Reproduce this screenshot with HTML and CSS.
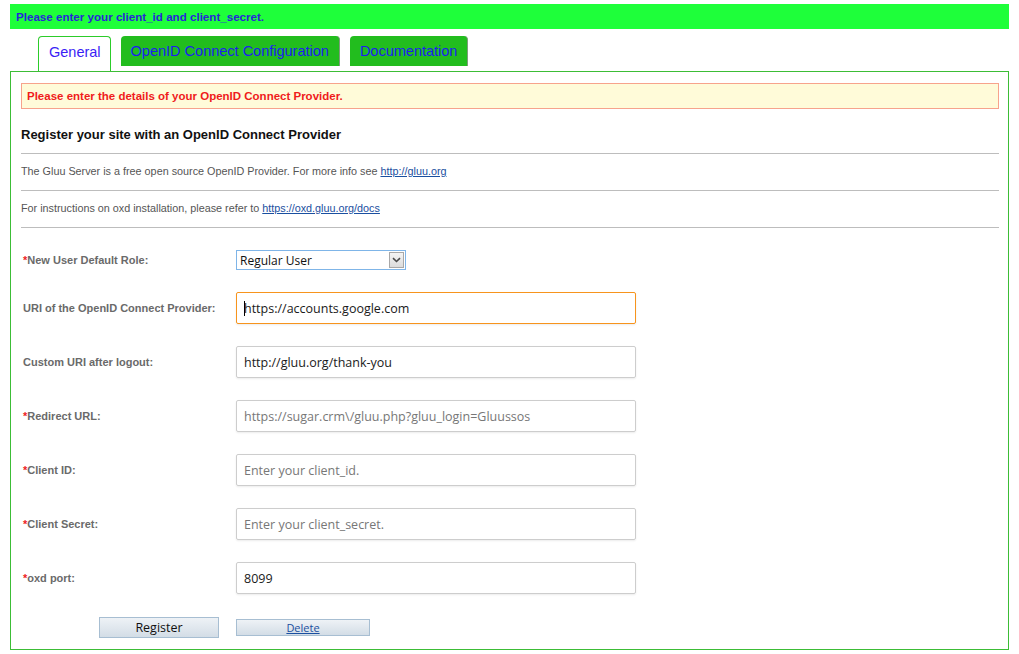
FILE: index.html
```html
<!DOCTYPE html>
<html>
<head>
<meta charset="utf-8">
<link rel="stylesheet" href="styles.css">
</head>
<body>
<div class="notice">Please enter your client_id and client_secret.</div>
<div class="tabs">
  <div class="tab active">General</div>
  <div class="tab">OpenID Connect Configuration</div>
  <div class="tab">Documentation</div>
</div>
<div class="panel">
  <div class="alert">Please enter the details of your OpenID Connect Provider.</div>
  <h2 class="title">Register your site with an OpenID Connect Provider</h2>
  <p class="info">The Gluu Server is a free open source OpenID Provider. For more info see <a href="#">http://gluu.org</a></p>
  <p class="info">For instructions on oxd installation, please refer to <a href="#">https://oxd.gluu.org/docs</a></p>
  <div class="form">
    <div class="row row-select">
      <label class="lbl"><span class="req">*</span>New User Default Role:</label>
      <div class="select">
        <span class="select-text">Regular User</span>
        <span class="select-btn"><svg width="9" height="6" viewBox="0 0 9 6"><path d="M1 1.2 L4.5 4.5 L8 1.2" fill="none" stroke="#4a4a4a" stroke-width="1.6"/></svg></span>
      </div>
    </div>
    <div class="row">
      <label class="lbl">URI of the OpenID Connect Provider:</label>
      <div class="input focus"><span class="caret"></span>https://accounts.google.com</div>
    </div>
    <div class="row">
      <label class="lbl">Custom URI after logout:</label>
      <div class="input">http://gluu.org/thank-you</div>
    </div>
    <div class="row">
      <label class="lbl"><span class="req">*</span>Redirect URL:</label>
      <div class="input muted">https://sugar.crm\/gluu.php?gluu_login=Gluussos</div>
    </div>
    <div class="row">
      <label class="lbl"><span class="req">*</span>Client ID:</label>
      <div class="input muted">Enter your client_id.</div>
    </div>
    <div class="row">
      <label class="lbl"><span class="req">*</span>Client Secret:</label>
      <div class="input muted">Enter your client_secret.</div>
    </div>
    <div class="row">
      <label class="lbl"><span class="req">*</span>oxd port:</label>
      <div class="input">8099</div>
    </div>
    <div class="row row-buttons">
      <div class="btn-cell"><button class="btn btn-register">Register</button></div>
      <div><button class="btn btn-delete"><a href="#">Delete</a></button></div>
    </div>
  </div>
</div>
</body>
</html>
```
FILE: styles.css
```css
html, body { margin: 0; padding: 0; background: #fff; }
body {
  padding: 4px 10px 0 10px;
  font-family: "Liberation Sans", Arial, sans-serif;
  width: 999px;
}
.notice {
  background: #1eff3a;
  height: 25px;
  line-height: 25px;
  padding-left: 6px;
  color: #2626d9;
  font-weight: bold;
  font-size: 11.6px;
}
.tabs {
  display: flex;
  gap: 10px;
  margin-top: 7px;
  padding-left: 28px;
  height: 35px;
  align-items: flex-start;
  position: relative;
  z-index: 2;
}
.tab {
  height: 30px;
  line-height: 31px;
  padding: 0 10px;
  font-size: 14.5px;
  color: #1c1cf0;
  background: #22bd1e;
  border-radius: 4px 4px 0 0;
  border-right: 1px solid #7e9a7c;
}
.tab.active {
  height: 35px;
  background: #fff;
  border: 1px solid #2ccc2a;
  border-bottom: none;
  box-sizing: border-box;
  line-height: 31px;
  color: #3a1ef5;
  padding: 0 9px 0 10px;
}
.panel {
  border: 1px solid #3cbd36;
  height: 579px;
  box-sizing: border-box;
  padding: 11px 9px 0 10px;
}
.alert {
  background: #fffbd9;
  border: 1px solid #f7a38c;
  height: 26px;
  box-sizing: border-box;
  line-height: 24px;
  padding-left: 5px;
  color: #ef1c1c;
  font-weight: bold;
  font-size: 11.5px;
}
.title {
  margin: 0;
  font-size: 13px;
  font-weight: bold;
  color: #111;
  height: 44px;
  line-height: 51px;
  border-bottom: 1px solid #bdbdbd;
}
.info {
  margin: 0;
  font-size: 10.8px;
  color: #555;
  height: 36px;
  line-height: 34px;
  border-bottom: 1px solid #bdbdbd;
}
.info a { color: #1a4fa0; }
.form {
  padding: 22px 0 0 2px;
}
.row {
  display: grid;
  grid-template-columns: 213px 400px;
  align-items: center;
  height: 32px;
  margin-bottom: 22px;
}
.row-select { height: 20px; margin-bottom: 22px; }
.lbl {
  font-size: 11px;
  font-weight: bold;
  color: #6a6a6a;
}
.req { color: #e22; }
.select {
  width: 170px;
  height: 20px;
  box-sizing: border-box;
  border: 1px solid #7fb5e8;
  display: flex;
  align-items: center;
  font-family: "Open Sans", sans-serif;
  font-size: 12px;
  color: #111;
  background: #fff;
}
.select-text { flex: 1; padding-left: 3px; }
.select-btn {
  width: 15px;
  height: 16px;
  margin-right: 1px;
  border: 1px solid #a8a8a8;
  box-sizing: border-box;
  background: linear-gradient(#f4f4f4, #dcdcdc);
  display: flex;
  align-items: center;
  justify-content: center;
}
.input {
  height: 32px;
  box-sizing: border-box;
  border: 1px solid #cdcdcd;
  border-radius: 2px;
  box-shadow: 0 1px 2px rgba(0,0,0,0.08);
  font-family: "Open Sans", sans-serif;
  font-size: 12.5px;
  color: #1a1a1a;
  line-height: 31px;
  padding-left: 7px;
  position: relative;
  white-space: nowrap;
}
.input.focus { border-color: #f7941d; }
.input.muted { color: #777; }
.caret {
  position: absolute;
  left: 7px;
  top: 8px;
  width: 1px;
  height: 15px;
  background: #000;
}
.row-buttons { height: 22px; margin-bottom: 0; margin-top: 0; }
.btn-cell { display: flex; justify-content: flex-start; padding-left: 76px; }
.btn {
  font-family: "Open Sans", sans-serif;
  border: 1px solid #a7bed2;
  background: linear-gradient(#eef2f6, #d3dde6);
  padding: 0;
  box-sizing: border-box;
  cursor: pointer;
}
.btn-register {
  width: 120px;
  height: 21px;
  font-size: 12.5px;
  color: #111;
}
.btn-delete {
  width: 134px;
  height: 17px;
  font-size: 11px;
  line-height: 14px;
}
.btn-delete a { color: #1a4fa0; }
```
